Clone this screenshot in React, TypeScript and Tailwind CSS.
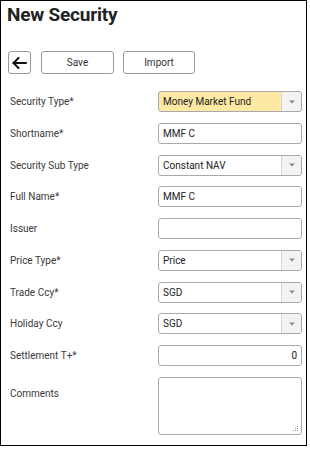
import React from 'react';

const FONT = { fontFamily: 'Roboto, "Liberation Sans", Arial, sans-serif' };

function Caret() {
  return (
    <svg width="6" height="4" viewBox="0 0 6 4" className="block">
      <path d="M0 0.5 H6 L3 3.5 Z" fill="#8a8a8a" />
    </svg>
  );
}

function SelectBox({ value, highlight }: { value: string; highlight?: boolean }) {
  return (
    <div
      className={`flex h-[21px] w-[144px] items-stretch rounded-[3px] border border-[#a9a9a9] ${highlight ? 'bg-[#fde9a3]' : 'bg-white'}`}
    >
      <div className="flex flex-1 items-center pl-[4px] text-[10px] text-[#222]">{value}</div>
      <div className="flex w-[20px] items-center justify-center rounded-r-[3px] border-l border-[#d4d4d4] bg-[#f3f3f3]">
        <Caret />
      </div>
    </div>
  );
}

function TextBox({ value, right }: { value?: string; right?: boolean }) {
  return (
    <div
      className={`flex h-[21px] w-[144px] items-center rounded-[3px] border border-[#a9a9a9] bg-white px-[4px] text-[10px] text-[#222] ${right ? 'justify-end' : ''}`}
    >
      {value}
    </div>
  );
}

interface Field {
  label: string;
  kind: 'select' | 'text';
  value?: string;
  highlight?: boolean;
  right?: boolean;
}

const fields: Field[] = [
  { label: 'Security Type*', kind: 'select', value: 'Money Market Fund', highlight: true },
  { label: 'Shortname*', kind: 'text', value: 'MMF C' },
  { label: 'Security Sub Type', kind: 'select', value: 'Constant NAV' },
  { label: 'Full Name*', kind: 'text', value: 'MMF C' },
  { label: 'Issuer', kind: 'text' },
  { label: 'Price Type*', kind: 'select', value: 'Price' },
  { label: 'Trade Ccy*', kind: 'select', value: 'SGD' },
  { label: 'Holiday Ccy', kind: 'select', value: 'SGD' },
  { label: 'Settlement T+*', kind: 'text', value: '0', right: true },
];

export default function App() {
  return (
    <div className="bg-white" style={FONT}>
      <div className="h-[446px] w-[307px] border border-black">
        {/* Title */}
        <h1 className="mt-[2px] pl-[6px] text-[19px] font-bold leading-[24px] tracking-[-0.2px] text-[#222]">
          New Security
        </h1>

        {/* Toolbar */}
        <div className="mt-[24px] flex items-center pl-[7px]">
          <button className="flex h-[23px] w-[23px] items-center justify-center rounded-[3px] border border-[#9a9a9a] bg-white">
            <svg width="15" height="12" viewBox="0 0 15 12" fill="none" stroke="#111" strokeWidth="2" strokeLinecap="round" strokeLinejoin="round">
              <path d="M1.5 6 H14" />
              <path d="M6.5 1 L1.5 6 L6.5 11" />
            </svg>
          </button>
          <button className="ml-[10px] h-[23px] w-[73px] rounded-[3px] border border-[#9a9a9a] bg-white text-[10px] text-[#333]">
            Save
          </button>
          <button className="ml-[9px] h-[23px] w-[72px] rounded-[3px] border border-[#9a9a9a] bg-white text-[10px] text-[#333]">
            Import
          </button>
        </div>

        {/* Form */}
        <div className="mt-[17px] flex flex-col gap-[10.75px] pl-[9px]">
          {fields.map(f => (
            <div key={f.label} className="flex items-center">
              <div className="w-[148px] text-[10px] text-[#3a3a3a]">{f.label}</div>
              {f.kind === 'select' ? (
                <SelectBox value={f.value ?? ''} highlight={f.highlight} />
              ) : (
                <TextBox value={f.value} right={f.right} />
              )}
            </div>
          ))}
          <div className="flex items-start">
            <div className="w-[148px] pt-[9px] text-[10px] text-[#3a3a3a]">Comments</div>
            <div className="relative h-[58px] w-[144px] rounded-[3px] border border-[#a9a9a9] bg-white">
              <svg width="7" height="7" viewBox="0 0 7 7" className="absolute bottom-[2px] right-[2px]">
                <g fill="#9a9a9a">
                  <rect x="5" y="1" width="1" height="1" />
                  <rect x="3" y="3" width="1" height="1" />
                  <rect x="5" y="3" width="1" height="1" />
                  <rect x="1" y="5" width="1" height="1" />
                  <rect x="3" y="5" width="1" height="1" />
                  <rect x="5" y="5" width="1" height="1" />
                </g>
              </svg>
            </div>
          </div>
        </div>
      </div>
    </div>
  );
}
